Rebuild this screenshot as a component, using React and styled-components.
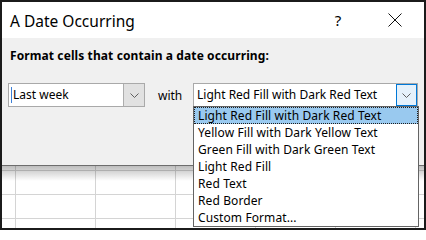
import React from "react";
import styled, { createGlobalStyle } from "styled-components";

const GlobalStyle = createGlobalStyle`
  html, body {
    margin: 0;
    padding: 0;
    background: #ffffff;
  }
  body {
    font-family: "Noto Sans", "Open Sans", "DejaVu Sans", sans-serif;
    color: #000;
  }
`;

const Frame = styled.div`
  position: relative;
  width: 426px;
  height: 230px;
  box-sizing: border-box;
  border: 2px solid #1b1b1b;
  background: #ffffff;
  overflow: hidden;
`;

const Dialog = styled.div`
  height: 164px;
  box-sizing: border-box;
  display: flex;
  flex-direction: column;
  background: #f0f0f0;
  border-bottom: 1px solid #6d6d6d;
`;

const TitleBar = styled.div`
  height: 36px;
  flex: none;
  display: flex;
  align-items: center;
  background: #ffffff;
  padding-left: 8px;
`;

const Title = styled.div`
  flex: 1;
  font-size: 15.5px;
  line-height: 20px;
  margin-top: 1px;
`;

const TitleButton = styled.div`
  width: ${(p) => p.$w}px;
  height: 36px;
  display: flex;
  align-items: center;
  justify-content: center;
  font-size: 15px;
`;

const Body = styled.div`
  padding: 10px 0 0 6px;
`;

const Prompt = styled.div`
  font-size: 12px;
  font-weight: 700;
  line-height: 16px;
  padding-left: 2px;
  letter-spacing: 0.1px;
`;

const Row = styled.div`
  display: flex;
  align-items: center;
  margin-top: 19px;
`;

const Combo = styled.div`
  position: relative;
  width: ${(p) => p.$w}px;
  height: 24px;
  box-sizing: border-box;
  border: 1px solid #a9a9a9;
  background: #ffffff;
  display: flex;
  align-items: center;
`;

const ComboText = styled.div`
  flex: 1;
  font-size: 12px;
  line-height: 16px;
  white-space: nowrap;
  overflow: hidden;
  border-left: ${(p) => (p.$caret ? "1px solid #3c7fd6" : "none")};
  margin-left: ${(p) => (p.$caret ? "2px" : "3px")};
  padding-left: ${(p) => (p.$caret ? "1px" : "0")};
`;

const DropButton = styled.div`
  width: 21px;
  height: 22px;
  box-sizing: border-box;
  display: flex;
  align-items: center;
  justify-content: center;
  border: ${(p) => (p.$active ? "1px solid #0078d7" : "none")};
  border-left: 1px solid ${(p) => (p.$active ? "#0078d7" : "#adadad")};
  background: ${(p) => (p.$active ? "#e5f1fb" : "#e1e1e1")};
`;

const With = styled.div`
  width: 35px;
  margin-left: 13px;
  font-size: 12px;
  line-height: 16px;
  padding-top: 2px;
`;

const List = styled.ul`
  position: absolute;
  left: -1px;
  top: 100%;
  width: 226px;
  box-sizing: border-box;
  margin: 0;
  padding: 0;
  list-style: none;
  background: #ffffff;
  border: 1px solid #646464;
  z-index: 2;
`;

const Item = styled.li`
  height: 17px;
  box-sizing: border-box;
  font-size: 12px;
  line-height: 15px;
  padding-left: 3px;
  white-space: nowrap;
  letter-spacing: 0.1px;
  background: ${(p) => (p.$selected ? "#99c9ef" : "transparent")};
  border: 1px ${(p) => (p.$selected ? "dotted #1e1e1e" : "solid transparent")};
`;

const Sheet = styled.div`
  height: 70px;
  background-color: #ffffff;
  background-image:
    linear-gradient(to bottom, rgba(0, 0, 0, 0.26), rgba(0, 0, 0, 0) 15px),
    repeating-linear-gradient(to bottom, transparent 0 4px, #d4d4d4 4px 5px, transparent 5px 24px),
    repeating-linear-gradient(to right, transparent 0 13px, #d4d4d4 13px 14px, transparent 14px 80px);
`;

const Chevron = () => (
  <svg width="9" height="5" viewBox="0 0 9 5">
    <path d="M0.5 0.5 L4.5 4.5 L8.5 0.5" fill="none" stroke="#5f5f5f" strokeWidth="1" />
  </svg>
);

const CloseIcon = () => (
  <svg width="14" height="14" viewBox="0 0 14 14">
    <path d="M0.5 0.5 L13.5 13.5 M13.5 0.5 L0.5 13.5" stroke="#111" strokeWidth="1" fill="none" />
  </svg>
);

const options = [
  "Light Red Fill with Dark Red Text",
  "Yellow Fill with Dark Yellow Text",
  "Green Fill with Dark Green Text",
  "Light Red Fill",
  "Red Text",
  "Red Border",
  "Custom Format...",
];

export default function App() {
  return (
    <>
      <GlobalStyle />
      <Frame>
        <Dialog>
          <TitleBar>
            <Title>A Date Occurring</Title>
            <TitleButton $w={56}>?</TitleButton>
            <TitleButton $w={58}>
              <CloseIcon />
            </TitleButton>
          </TitleBar>
          <Body>
            <Prompt>Format cells that contain a date occurring:</Prompt>
            <Row>
              <Combo $w={137}>
                <ComboText $caret>Last week</ComboText>
                <DropButton>
                  <Chevron />
                </DropButton>
              </Combo>
              <With>with</With>
              <Combo $w={225}>
                <ComboText>Light Red Fill with Dark Red Text</ComboText>
                <DropButton $active>
                  <Chevron />
                </DropButton>
                <List>
                  {options.map((o, i) => (
                    <Item key={o} $selected={i === 0}>
                      {o}
                    </Item>
                  ))}
                </List>
              </Combo>
            </Row>
          </Body>
        </Dialog>
        <Sheet />
      </Frame>
    </>
  );
}
